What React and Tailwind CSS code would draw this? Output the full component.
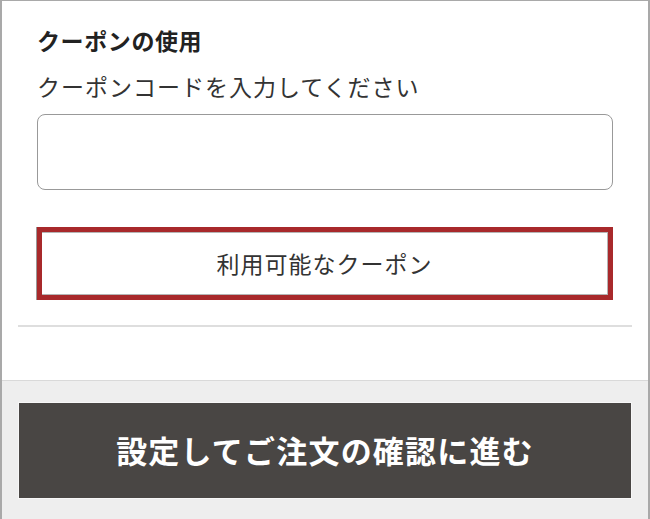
export default function App() {
  const font = { fontFamily: '"Noto Sans CJK JP", "Noto Sans", sans-serif' };
  return (
    <div style={font} className="w-[650px] h-[519px] bg-white border-t border-l-2 border-r-2 border-[#a9a9a9] flex flex-col overflow-hidden">
      <div className="px-[16px]">
        <div className="px-[19px] pt-[23px]">
          <h2 className="text-[23px] leading-[32px] font-bold text-[#222] tracking-[0.6px]">クーポンの使用</h2>
          <p className="mt-[14px] text-[23px] leading-[32px] text-[#333] tracking-[1px]">クーポンコードを入力してください</p>
          <input
            type="text"
            className="mt-[12px] block w-full h-[76px] rounded-[8px] border-[1.5px] border-[#999] bg-white px-3 outline-none"
          />
          <div className="mt-[37px] h-[73px] -ml-[1px] border-l border-[#999]">
            <div className="h-full border-[5px] border-[#a8292b]">
              <button className="w-full h-full border border-[#b5b5b5] border-l-0 bg-white text-[23px] text-[#333] tracking-[1px] flex items-center justify-center">
                利用可能なクーポン
              </button>
            </div>
          </div>
        </div>
        <div className="mt-[25px] h-[2px] bg-[#dedede]" />
      </div>
      <div className="flex-1" />
      <div className="h-[139px] border-t border-[#d9d9d9] bg-[#eeeeee] px-[16px] pt-[21px]">
        <button className="w-full h-[97px] bg-[#494644] border border-[#f7f7f7] text-white text-[31px] font-bold tracking-[1.2px] flex items-center justify-center">
          設定してご注文の確認に進む
        </button>
      </div>
    </div>
  );
}
